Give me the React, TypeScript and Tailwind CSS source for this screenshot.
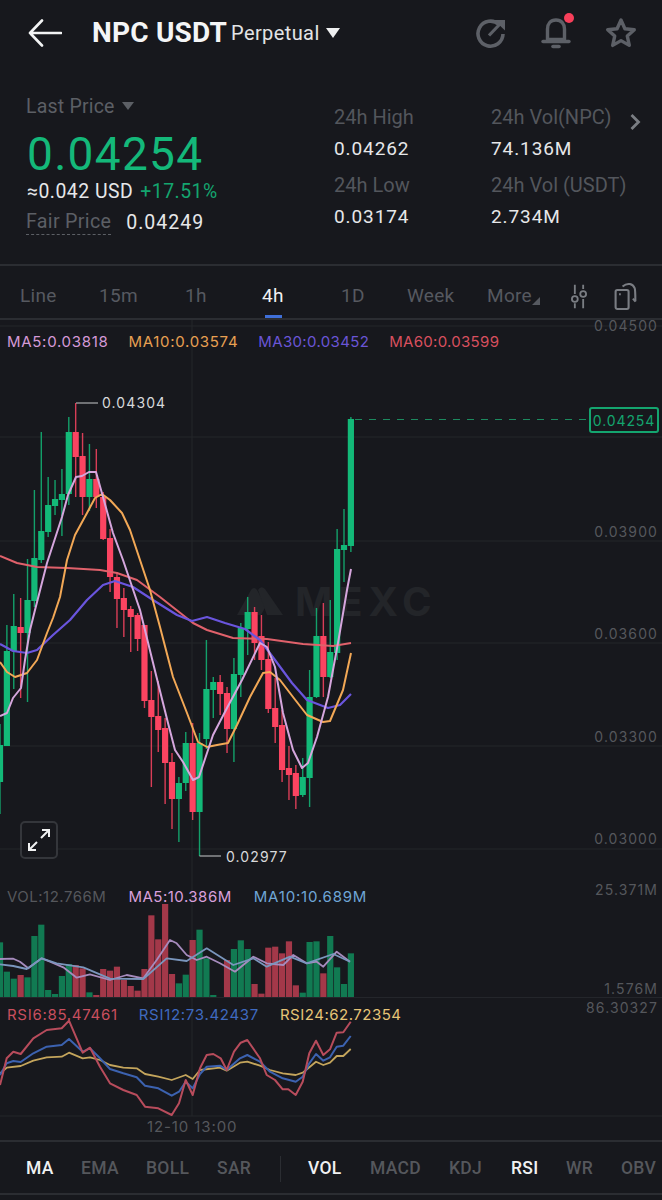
const G = "#13b978", R = "#fb4461";
// [wickHigh, top, bottom, wickLow, isGreen]
const candles: [number, number, number, number, number][] = [
[724,745,782,814,1],[625,651,746,746,1],[594,626,651,689,1],[598,627,633,698,0],[559,600,633,702,1],[490,558,601,607,1],
[432,531,560,563,1],[477,505,532,537,1],[480,499,506,515,1],[469,494,500,536,1],[417,432,494,505,1],[403,432,457,497,0],
[433,456,497,515,0],[444,479,497,511,1],[449,479,497,508,0],[492,497,539,540,0],[529,538,577,592,0],[572,577,599,628,0],
[588,598,610,637,0],[606,609,617,652,0],[613,615,639,651,0],[625,625,701,708,0],[671,700,717,787,0],[681,716,730,752,0],
[718,728,763,804,0],[753,762,799,829,0],[777,783,799,842,1],[732,743,783,791,1],[723,743,812,820,0],[733,743,812,856,1],
[640,689,739,749,1],[677,682,690,718,1],[675,682,694,715,0],[687,693,729,753,0],[658,674,729,762,1],[623,628,675,697,1],
[597,612,629,655,1],[607,612,643,660,0],[615,636,660,670,0],[642,659,709,713,0],[678,708,727,743,0],[710,725,770,782,0],
[746,768,775,800,0],[765,773,796,809,0],[758,777,795,797,1],[670,697,778,807,1],[608,636,697,698,1],[603,636,677,697,0],
[600,652,677,678,1],[529,549,653,660,1],[509,545,550,582,1],[417,419,546,552,1],
];
const ma5 = "0,716 7,713 13,698 21,688 25,660 30,630 35,610 47,563 62,517 68,495 76,477 82,476 89,472 96,472 103,497 113,533 123,560 140,610 158,683 168,723 175,750 183,762 193,780 199,777 207,753 213,735 227,708 242,680 260,643 267,647 275,667 283,713 293,750 302,768 308,763 317,737 328,697 338,643 347,590 351,569";
const ma10 = "0,662 7,672 15,677 27,673 37,660 47,633 53,618 60,597 67,560 75,535 87,513 95,498 102,494 110,500 122,513 130,530 140,560 150,590 160,627 173,677 187,713 198,742 207,747 217,745 228,743 237,725 250,697 263,673 270,672 280,680 293,697 307,715 323,722 330,721 343,690 351,653";
const ma30 = "0,644 13,651 27,653 37,650 53,635 70,620 87,600 103,585 115,581 133,587 153,600 177,615 192,621 207,617 225,623 245,629 260,640 275,660 292,683 307,700 328,708 340,705 351,694";
const ma60 = "0,556 17,563 37,567 67,568 100,570 117,573 137,580 160,597 193,623 207,630 233,638 267,639 303,644 333,646 351,643";
const vols: [number, number][] = [[187,1],[275,1],[296,1],[285,0],[292,1],[168,1],[134,1],[330,1],[342,1],[288,1],[252,1],[255,0],[265,0],[337,1],[345,0],[267,0],[272,0],[260,0],[300,0],[318,0],[332,0],[267,0],[106,0],[178,0],[72,0],[282,0],[310,1],[284,1],[180,0],[149,1],[235,1],[345,1],[351,0],[240,0],[207,1],[181,1],[207,1],[312,0],[341,0],[203,0],[200,0],[220,0],[184,0],[316,0],[338,1],[186,1],[184,1],[280,0],[168,1],[262,1],[312,1],[220,1]];
const scale = (s: string, base: number) => s.split(" ").map(p => { const [x, y] = p.split(",").map(Number); return `${(x / 3).toFixed(1)},${(base + y / 3).toFixed(1)}`; }).join(" ");
const volMa5 = scale("0,237 40,236 60,245 85,265 105,250 125,235 150,245 190,262 230,293 270,283 330,300 380,285 430,295 470,240 510,180 530,190 560,225 590,240 620,230 660,250 705,275 760,230 800,250 850,255 880,225 920,250 950,245 970,260 1010,215 1050,245", 880);
const volMa10 = scale("0,253 40,258 80,267 125,235 170,250 250,262 330,296 430,297 500,235 560,243 620,205 700,255 760,235 800,260 870,230 920,250 1000,222 1050,245", 880);
const rsi6 = scale("0,255 20,175 40,155 62,162 100,115 140,90 185,85 207,62 248,158 270,143 300,200 330,250 370,270 410,285 435,320 475,325 515,345 537,310 557,240 578,285 600,205 620,165 640,162 662,175 680,210 702,155 722,128 742,120 780,175 800,225 825,240 848,268 865,268 887,285 908,245 928,160 948,122 970,165 990,148 1010,98 1030,97 1052,65", 1000);
const rsi12 = scale("0,225 20,190 40,183 62,186 100,160 140,140 185,135 207,117 248,155 270,145 300,175 330,207 370,220 410,232 435,257 475,265 515,287 537,275 557,245 578,265 600,222 620,200 660,197 680,210 720,175 742,165 780,185 810,215 848,235 887,245 908,230 928,190 948,162 970,182 990,172 1010,140 1030,137 1052,108", 1000);
const rsi24 = scale("0,220 20,203 62,198 100,182 140,172 185,170 207,158 248,175 270,172 300,180 330,195 370,203 410,205 435,222 475,230 515,240 557,225 578,237 600,210 660,203 680,212 720,188 742,185 780,197 810,210 848,220 887,225 908,218 948,185 970,195 990,188 1010,168 1030,168 1052,147", 1000);

function Stat({ label, value }: { label: string; value: string }) {
  return (
    <div className="flex flex-col">
      <span className="text-[20px] leading-[24px] text-[#53565c] whitespace-nowrap">{label}</span>
      <span className="mt-[8px] text-[19px] leading-[24px] tracking-[0.9px] text-[#e6e7e9]">{value}</span>
    </div>
  );
}

function Axis({ top, children }: { top: number; children: string }) {
  return (
    <span style={{ top }} className="absolute right-[4px] text-[14px] leading-[16px] tracking-[1.1px] text-[#55575c] font-['Inter',sans-serif]">{children}</span>
  );
}

export default function App() {
  return (
    <div className="w-[662px] h-[1200px] overflow-hidden bg-[#17181d] flex flex-col font-['Roboto',sans-serif]">
      {/* header */}
      <div className="h-[65px] flex items-center pl-[28px] pr-[25px] pt-[1px]">
        <svg width="34" height="30" viewBox="0 0 34 30" fill="none" stroke="#f2f3f4" strokeWidth="2.6" strokeLinecap="round" strokeLinejoin="round">
          <path d="M33 15H2M14 2.5L2 15l12 12.5" />
        </svg>
        <span className="ml-[30px] text-[28px] leading-[30px] font-bold text-[#f4f5f6] tracking-[0.2px] whitespace-nowrap">NPC USDT</span>
        <span className="ml-[4px] text-[20px] leading-[30px] text-[#e3e4e6] tracking-[0.4px]">Perpetual</span>
        <svg className="ml-[6px]" width="14" height="12" viewBox="0 0 14 12"><path d="M0 1h14L7 11z" fill="#eeeff0" /></svg>
        <div className="ml-auto flex items-center gap-[34px]">
          <svg width="32" height="32" viewBox="0 0 32 32" fill="none" stroke="#5d6067" strokeWidth="3.6">
            <path d="M24 7.5A12.5 12.5 0 1 0 28 17" />
            <path d="M14 18.5L25 7" strokeWidth="3.2" />
            <path d="M19 3h11v10.5z" fill="#5d6067" stroke="none" />
          </svg>
          <div className="relative w-[30px] h-[34px]">
            <svg width="30" height="34" viewBox="0 0 30 34" fill="none" stroke="#5d6067" strokeWidth="3.4" strokeLinejoin="round" strokeLinecap="round">
              <path d="M15 4c-5.500 0-8.500 4-8.500 9v10.500h17V13c0-5-3-9-8.500-9z" />
              <path d="M2 25.500h26" />
              <path d="M12 30.500h6" strokeWidth="3.600" />
            </svg>
            <span className="absolute top-[-3px] right-[-3px] w-[10px] h-[10px] rounded-full bg-[#f83f5a]" />
          </div>
          <svg width="32" height="32" viewBox="0 0 32 32" fill="none" stroke="#5d6067" strokeWidth="3.4" strokeLinejoin="round">
            <path d="M16 3l3.900 8.700 9.400 1-7 6.400 2 9.300L16 23.600l-8.300 4.800 2-9.300-7-6.400 9.400-1z" />
          </svg>
        </div>
      </div>

      {/* stats */}
      <div className="h-[201px] border-b-2 border-[#2b2d32] flex pl-[26px]">
        <div className="w-[308px] flex flex-col pt-[30px]">
          <div className="flex items-center h-[24px]">
            <span className="text-[19.5px] leading-[24px] text-[#5c5f65] tracking-[0.2px]">Last Price</span>
            <svg className="ml-[7px] mb-[3px]" width="12" height="8" viewBox="0 0 12 8"><path d="M0 0h12L6 8z" fill="#5c5f65" /></svg>
          </div>
          <span className="mt-[11px] text-[46px] leading-[48px] text-[#14b87a] tracking-[1.3px] pl-[1px]">0.04254</span>
          <div className="mt-[1px] flex items-baseline text-[19.4px] leading-[26px] tracking-[0.5px] pl-[1px]">
            <span className="text-[#e6e7e9]">≈0.042 USD</span>
            <span className="ml-[7px] text-[#14a56f]">+17.51%</span>
          </div>
          <div className="mt-[5px] flex items-center">
            <span className="text-[19.7px] leading-[24px] tracking-[0.3px] text-[#5c5f65] border-b border-dashed border-[#5c5f65]">Fair Price</span>
            <span className="ml-[15px] text-[19.5px] leading-[24px] tracking-[1px] text-[#e6e7e9]">0.04249</span>
          </div>
        </div>
        <div className="w-[157px] flex flex-col gap-[12px] pt-[40px]">
          <Stat label="24h High" value="0.04262" />
          <Stat label="24h Low" value="0.03174" />
        </div>
        <div className="flex-1 flex flex-col gap-[12px] pt-[40px] relative">
          <Stat label="24h Vol(NPC)" value="74.136M" />
          <Stat label="24h Vol (USDT)" value="2.734M" />
          <svg className="absolute left-[138px] top-[48px]" width="12" height="18" viewBox="0 0 12 18" fill="none" stroke="#7a7d83" strokeWidth="2.800"><path d="M2.500 2l7 7-7 7" /></svg>
        </div>
      </div>

      {/* tabs */}
      <div className="h-[54px] pt-[9px] border-b-2 border-[#2b2d32] flex items-center text-[19px] tracking-[0.3px] text-[#565960] relative">
        <span className="absolute left-[20px]">Line</span>
        <span className="absolute left-[99px]">15m</span>
        <span className="absolute left-[185px]">1h</span>
        <span className="absolute left-[262px] text-[#f0f1f2]">4h</span>
        <span className="absolute left-[341px]">1D</span>
        <span className="absolute left-[407px]">Week</span>
        <span className="absolute left-[487px]">More</span>
        <svg className="absolute left-[532px] top-[31px]" width="8" height="8" viewBox="0 0 8 8"><path d="M8 0v8H0z" fill="#565960" /></svg>
        <span className="absolute left-[265px] bottom-[0px] w-[17px] h-[3px] bg-[#3f6fd8]" />
        <svg className="absolute left-[568px] top-[18px]" width="22" height="25" viewBox="0 0 24 30" fill="none" stroke="#7a7d83" strokeWidth="2.200">
          <path d="M7 1v11M7 23v6M17 1v5M17 18v11" />
          <circle cx="7" cy="18" r="3.500" /><circle cx="17" cy="12" r="3.500" />
        </svg>
        <svg className="absolute left-[613px] top-[15px]" width="26" height="30" viewBox="0 0 30 34" fill="none" stroke="#7a7d83" strokeWidth="2.400">
          <rect x="3" y="10" width="15" height="22" rx="2" />
          <path d="M7 15h2" />
          <path d="M11 6c6-5 12-3 14 2 .8 2 .8 7 .8 15" />
          <path d="M23 20l3 3.500" />
        </svg>
      </div>

      {/* main chart */}
      <div className="relative h-[562px] overflow-hidden">
        <span className="absolute left-[295px] top-[260px] text-[40px] leading-[44px] font-bold tracking-[6px] text-[#232529] font-['Inter',sans-serif]">MEXC</span>
        <svg className="absolute inset-0" width="662" height="562" viewBox="0 320 662 562">
          {[326, 437, 541, 643, 746, 849].map(y => <line key={y} x1="0" x2="662" y1={y} y2={y} stroke="#24262b" strokeWidth="1" />)}
          <line x1="192" x2="192" y1="320" y2="882" stroke="#24262b" strokeWidth="1" />
          {/* watermark logo */}
          <path d="M237 615l14-25q3-4 6 0l9 16-5 9z" fill="#232529" />
          <path d="M258 590q3-5 7-1l18 26h-16z" fill="#232529" />
          {candles.map(([h, t, b, l, g], i) => {
            const x = i * 6.88;
            const c = g ? G : R;
            return (
              <g key={i}>
                <rect x={x - 0.7} y={h} width="1.400" height={l - h} fill={c} fillOpacity="0.85" />
                <rect x={x - 3.100} y={t} width="6.200" height={b - t} fill={c} />
              </g>
            );
          })}
          <polyline points={ma60} fill="none" stroke="#e0616b" strokeWidth="2" strokeLinejoin="round" />
          <polyline points={ma30} fill="none" stroke="#6a55de" strokeWidth="2.200" strokeLinejoin="round" />
          <polyline points={ma10} fill="none" stroke="#f2a856" strokeWidth="2" strokeLinejoin="round" />
          <polyline points={ma5} fill="none" stroke="#d5a6dd" strokeWidth="2" strokeLinejoin="round" />
          <path d="M76 403H98" stroke="#c9cacd" strokeWidth="1" fill="none" />
          <path d="M199.500 856H221" stroke="#c9cacd" strokeWidth="1" fill="none" />
          <line x1="355" x2="589" y1="419.500" y2="419.500" stroke="#1c8a5f" strokeWidth="1" strokeDasharray="7 7" />
        </svg>
        <div className="absolute left-[7px] top-[13px] flex gap-[20px] text-[15px] leading-[18px] tracking-[0.7px] font-['Inter',sans-serif] whitespace-nowrap">
          <span className="text-[#d59ad8]">MA5:0.03818</span>
          <span className="text-[#e8a052]">MA10:0.03574</span>
          <span className="text-[#6a55d6] tracking-[0.35px]">MA30:0.03452</span>
          <span className="text-[#d9505f] tracking-[0.3px]">MA60:0.03599</span>
        </div>
        <span className="absolute left-[102px] top-[74px] text-[14px] leading-[18px] tracking-[1.1px] text-[#d8d9db] font-['Inter',sans-serif]">0.04304</span>
        <span className="absolute left-[226px] top-[528px] text-[14px] leading-[18px] tracking-[1.1px] text-[#d8d9db] font-['Inter',sans-serif]">0.02977</span>
        <Axis top={-2}>0.04500</Axis>
        <Axis top={100}>0.04200</Axis>
        <Axis top={204}>0.03900</Axis>
        <Axis top={306}>0.03600</Axis>
        <Axis top={409}>0.03300</Axis>
        <Axis top={511}>0.03000</Axis>
        <div className="absolute left-[589px] top-[87px] w-[70px] h-[26px] rounded-[3px] border-2 border-[#14a56f] bg-[#17181d] flex items-center justify-center text-[14px] tracking-[0.9px] text-[#14a56f] font-['Inter',sans-serif]">0.04254</div>
        <div className="absolute left-[20px] top-[501px] w-[38px] h-[38px] rounded-[5px] border-2 border-[#34363b] bg-[#17181d] flex items-center justify-center">
          <svg width="24" height="24" viewBox="0 0 24 24" fill="none" stroke="#f0f1f2" strokeWidth="2"><path d="M14 10l8-8M15 2h7v7M10 14l-8 8M2 15v7h7" /></svg>
        </div>
      </div>

      {/* volume */}
      <div className="relative h-[115px] overflow-hidden">
        <svg className="absolute inset-0" width="662" height="115" viewBox="0 882 662 115">
          <line x1="192" x2="192" y1="882" y2="997" stroke="#24262b" strokeWidth="1" />
          {vols.map(([t, g], i) => (
            <rect key={i} x={i * 6.88 - 3.100} y={880 + t / 3} width="6.200" height={997 - (880 + t / 3)} fill={g ? "#117a52" : "#a33849"} />
          ))}
          <polyline points={volMa5} fill="none" stroke="#a68bbd" strokeWidth="1.800" strokeLinejoin="round" />
          <polyline points={volMa10} fill="none" stroke="#7a96bd" strokeWidth="1.800" strokeLinejoin="round" />
        </svg>
        <div className="absolute left-[7px] top-[6px] flex gap-[22px] text-[15px] leading-[18px] tracking-[0.5px] font-['Inter',sans-serif] whitespace-nowrap">
          <span className="text-[#55575c]">VOL:12.766M</span>
          <span className="text-[#d9a0dc]">MA5:10.386M</span>
          <span className="text-[#6fa6d6] tracking-[0.8px]">MA10:10.689M</span>
        </div>
        <Axis top={0}>25.371M</Axis>
        <Axis top={99}>1.576M</Axis>
      </div>

      {/* rsi */}
      <div className="relative h-[145px] overflow-hidden border-t border-[#24262b] border-b-2 border-b-[#2b2d32]">
        <svg className="absolute inset-0" width="662" height="142" viewBox="0 998 662 142">
          <line x1="0" x2="662" y1="1116" y2="1116" stroke="#24262b" strokeWidth="1" />
          <line x1="192" x2="192" y1="998" y2="1116" stroke="#24262b" strokeWidth="1" />
          <polyline points={rsi24} fill="none" stroke="#c4a55c" strokeWidth="1.800" strokeLinejoin="round" />
          <polyline points={rsi12} fill="none" stroke="#3c62b0" strokeWidth="2" strokeLinejoin="round" />
          <polyline points={rsi6} fill="none" stroke="#b84c5c" strokeWidth="2" strokeLinejoin="round" />
        </svg>
        <div className="absolute left-[7px] top-[8px] flex gap-[21px] text-[15px] leading-[18px] tracking-[0.7px] font-['Inter',sans-serif] whitespace-nowrap">
          <span className="text-[#c94f5f]">RSI6:85.47461</span>
          <span className="text-[#3f6ac0]">RSI12:73.42437</span>
          <span className="text-[#e6c477] tracking-[0.5px]">RSI24:62.72354</span>
        </div>
        <Axis top={2}>86.30327</Axis>
        <span className="absolute left-[147px] top-[120px] text-[15px] leading-[18px] tracking-[0.9px] text-[#55575c] font-['Inter',sans-serif]">12-10 13:00</span>
      </div>

      {/* indicators */}
      <div className="relative h-[53px] pt-[2px] border-b-2 border-[#2b2d32] flex items-center text-[17.5px] font-medium tracking-[0.3px] text-[#55575c]">
        <span className="absolute left-[26px] text-[#f0f1f2]">MA</span>
        <span className="absolute left-[81px]">EMA</span>
        <span className="absolute left-[146px]">BOLL</span>
        <span className="absolute left-[217px]">SAR</span>
        <span className="absolute left-[280px] top-[14px] w-[1px] h-[26px] bg-[#2b2d32]" />
        <span className="absolute left-[308px] text-[#f0f1f2]">VOL</span>
        <span className="absolute left-[370px]">MACD</span>
        <span className="absolute left-[449px]">KDJ</span>
        <span className="absolute left-[511px] text-[#f0f1f2]">RSI</span>
        <span className="absolute left-[566px]">WR</span>
        <span className="absolute left-[621px]">OBV</span>
      </div>
    </div>
  );
}
